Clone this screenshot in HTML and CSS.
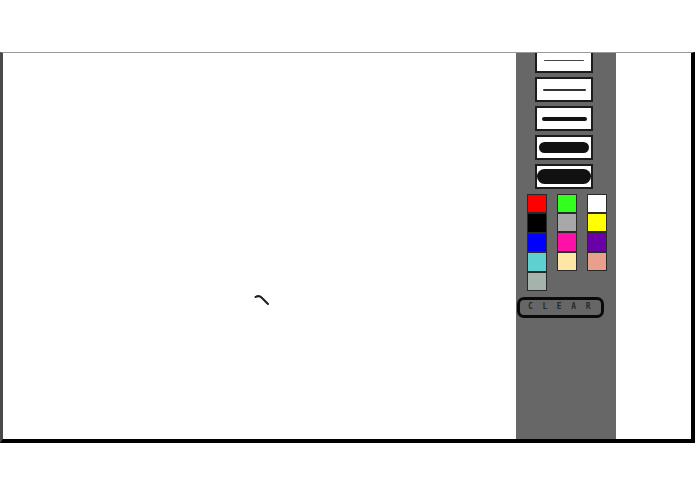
FILE: index.html
```html
<!DOCTYPE html>
<html>
<head>
<meta charset="utf-8">
<link rel="stylesheet" href="styles.css">
</head>
<body>
<div class="stage">
  <div class="canvas">
    <svg class="ink" width="513" height="386" viewBox="0 0 513 386">
      <path d="M252.5 244 Q256 242 258.5 244.5 L265 251" fill="none" stroke="#1e1e1e" stroke-width="2" stroke-linecap="round"/>
    </svg>
  </div>
  <div class="sidebar">
    <div class="sizes">
      <div class="size"><span class="line l1"></span></div>
      <div class="size"><span class="line l2"></span></div>
      <div class="size"><span class="line l3"></span></div>
      <div class="size"><span class="line l4"></span></div>
      <div class="size"><span class="line l5"></span></div>
    </div>
    <div class="palette">
      <div class="col">
        <div class="sw red"></div>
        <div class="sw black tall"></div>
        <div class="sw blue"></div>
        <div class="sw cyan"></div>
        <div class="sw sage"></div>
      </div>
      <div class="col">
        <div class="sw green"></div>
        <div class="sw grey"></div>
        <div class="sw magenta"></div>
        <div class="sw cream"></div>
      </div>
      <div class="col">
        <div class="sw white"></div>
        <div class="sw yellow"></div>
        <div class="sw purple"></div>
        <div class="sw salmon"></div>
      </div>
    </div>
    <div class="clear">CLEAR</div>
  </div>
  <div class="margin-right"></div>
</div>
</body>
</html>
```

FILE: styles.css
```css
html, body {
  margin: 0;
  padding: 0;
  background: #ffffff;
}

body {
  width: 695px;
  height: 494px;
  overflow: hidden;
  font-family: "Liberation Sans", Arial, sans-serif;
}

.stage {
  margin-top: 52px;
  width: 695px;
  height: 391px;
  box-sizing: border-box;
  border-top: 1px solid #9a9a9a;
  border-left: 3px solid #4a4a4a;
  border-right: 4px solid #000000;
  border-bottom: 4px solid #000000;
  display: flex;
  background: #ffffff;
}

.canvas {
  width: 513px;
  flex: none;
  position: relative;
}

.ink {
  position: absolute;
  left: 0;
  top: 0;
}

.sidebar {
  width: 100px;
  flex: none;
  background: #676767;
  overflow: hidden;
  display: flex;
  flex-direction: column;
}

.margin-right {
  flex: 1;
}

.sizes {
  margin-top: -5px;
  padding-left: 19px;
  display: flex;
  flex-direction: column;
  gap: 4px;
}

.size {
  width: 58px;
  height: 25px;
  box-sizing: border-box;
  border: 2px solid #1c1c1c;
  background: #ffffff;
  display: flex;
  align-items: center;
  justify-content: center;
}

.line {
  display: block;
  background: #111111;
  border-radius: 10px;
}

.l1 { width: 40px; height: 1.5px; background: #444; }
.l2 { width: 43px; height: 2px; background: #333; }
.l3 { width: 45px; height: 4px; }
.l4 { width: 50px; height: 11px; }
.l5 { width: 54px; height: 15px; border-radius: 8px; }

.palette {
  margin-top: 5px;
  padding-left: 11px;
  display: flex;
  gap: 10px;
}

.col {
  display: flex;
  flex-direction: column;
}

.sw {
  width: 20px;
  height: 19.2px;
  box-sizing: border-box;
  border: 1.5px solid #2a2a2a;
}

.sw.tall { height: 20px; }

.red { background: #ff0000; }
.black { background: #000000; }
.blue { background: #0000ff; }
.cyan { background: #5fd0d0; }
.sage { background: #a4b4ac; }
.green { background: #33ff1f; }
.grey { background: #a8a8a8; }
.magenta { background: #ff10a6; }
.cream { background: #ffe6a6; }
.white { background: #ffffff; }
.yellow { background: #ffff00; }
.purple { background: #6a00a8; }
.salmon { background: #e8a08c; }

.clear {
  margin-top: 6px;
  margin-left: 1px;
  width: 87px;
  height: 21px;
  box-sizing: border-box;
  border: 3px solid #0a0a0a;
  border-radius: 7px;
  background: #666666;
  color: #2a2a2a;
  font-family: "DejaVu Sans Mono", monospace;
  font-weight: bold;
  font-size: 8px;
  letter-spacing: 9.6px;
  line-height: 13px;
  padding-left: 8px;
}
```
